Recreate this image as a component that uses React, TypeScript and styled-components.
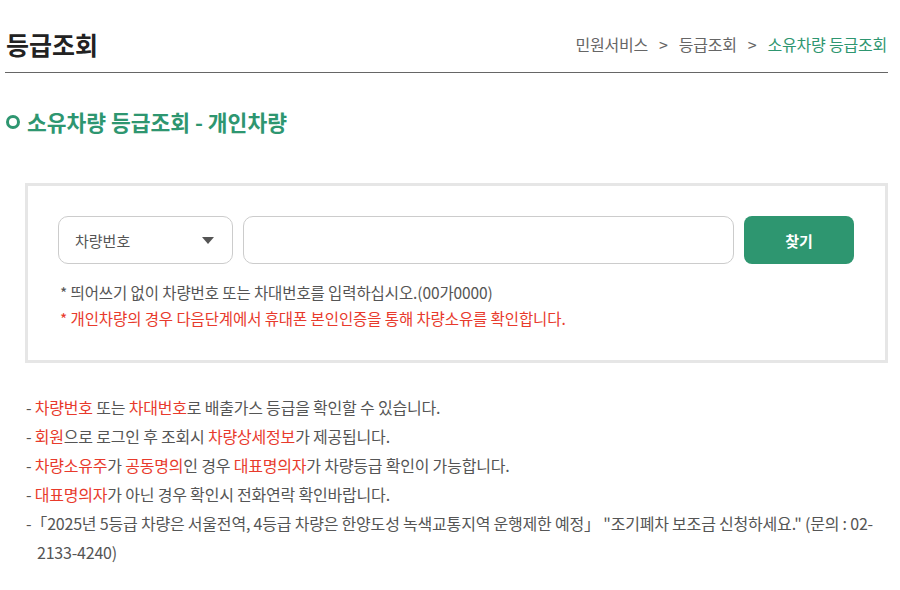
import React from "react";
import styled, { createGlobalStyle } from "styled-components";

const Global = createGlobalStyle`
  html, body { margin: 0; padding: 0; background: #fff; }
  body { font-family: "Noto Sans CJK KR", "Noto Sans", sans-serif; color: #555; }
  * { box-sizing: border-box; }
`;

const GREEN = "#2e9670";
const RED = "#e83a2c";

const Page = styled.div`
  width: 883px;
  margin-left: 5px;
`;

const Header = styled.header`
  display: flex;
  align-items: center;
  justify-content: space-between;
  height: 73px;
  padding-top: 24px;
  padding-bottom: 8px;
  border-bottom: 1px solid #666;
`;

const Title = styled.h1`
  margin: 0;
  font-size: 25px;
  line-height: 40px;
  font-weight: 700;
  color: #222;
  padding-left: 1px;
`;

const Crumbs = styled.nav`
  display: flex;
  align-items: center;
  gap: 11px;
  font-size: 16px;
  letter-spacing: -0.2px;
  color: #666;
  padding-right: 1px;
`;

const Crumb = styled.span<{ $active?: boolean }>`
  color: ${(p) => (p.$active ? GREEN : "#666")};
`;

const Heading = styled.h2`
  display: flex;
  align-items: center;
  gap: 7px;
  margin: 34px 0 0;
  font-size: 21.5px;
  line-height: 30px;
  font-weight: 700;
  color: ${GREEN};
`;

const Ring = styled.span`
  width: 14px;
  height: 14px;
  border-radius: 50%;
  border: 3.5px solid ${GREEN};
  margin-left: 1px;
`;

const SearchBox = styled.section`
  margin: 46px 0 0 20px;
  border: 3px solid #e6e6e6;
  padding: 30px 31px 29px 30px;
`;

const SearchRow = styled.div`
  display: flex;
  gap: 10px;
  height: 48px;
`;

const SelectBox = styled.div`
  width: 175px;
  flex: none;
  display: flex;
  align-items: center;
  justify-content: space-between;
  padding: 0 18px 0 16px;
  border: 1px solid #ccc;
  border-radius: 10px;
  font-size: 15px;
  color: #555;
`;

const Caret = styled.span`
  width: 0;
  height: 0;
  border-left: 6px solid transparent;
  border-right: 6px solid transparent;
  border-top: 7px solid #555;
`;

const TextInput = styled.input`
  flex: 1;
  min-width: 0;
  border: 1px solid #ccc;
  border-radius: 10px;
  font: inherit;
  padding: 0 14px;
  outline: none;
`;

const FindButton = styled.button`
  width: 110px;
  flex: none;
  border: none;
  border-radius: 8px;
  background: ${GREEN};
  color: #fff;
  font-family: inherit;
  font-size: 15px;
  font-weight: 700;
`;

const Notes = styled.div`
  margin-top: 15px;
  padding-left: 2px;
  font-size: 15.5px;
  line-height: 26px;
`;

const Note = styled.p<{ $red?: boolean }>`
  margin: 0;
  color: ${(p) => (p.$red ? RED : "#555")};
  letter-spacing: -0.1px;
`;

const List = styled.ul`
  list-style: none;
  margin: 30px 0 0;
  padding: 0 0 0 21px;
  font-size: 16px;
  line-height: 29px;
  letter-spacing: -0.2px;
`;

const Item = styled.li`
  padding-left: 11px;
  text-indent: -11px;
`;

const Em = styled.span`
  color: ${RED};
`;

export default function App() {
  return (
    <Page>
      <Global />
      <Header>
        <Title>등급조회</Title>
        <Crumbs>
          <Crumb>민원서비스</Crumb>
          <Crumb>&gt;</Crumb>
          <Crumb>등급조회</Crumb>
          <Crumb>&gt;</Crumb>
          <Crumb $active>소유차량 등급조회</Crumb>
        </Crumbs>
      </Header>
      <Heading>
        <Ring />
        소유차량 등급조회 - 개인차량
      </Heading>
      <SearchBox>
        <SearchRow>
          <SelectBox>
            차량번호
            <Caret />
          </SelectBox>
          <TextInput type="text" />
          <FindButton>찾기</FindButton>
        </SearchRow>
        <Notes>
          <Note>* 띄어쓰기 없이 차량번호 또는 차대번호를 입력하십시오.(00가0000)</Note>
          <Note $red>* 개인차량의 경우 다음단계에서 휴대폰 본인인증을 통해 차량소유를 확인합니다.</Note>
        </Notes>
      </SearchBox>
      <List>
        <Item>
          - <Em>차량번호</Em> 또는 <Em>차대번호</Em>로 배출가스 등급을 확인할 수 있습니다.
        </Item>
        <Item>
          - <Em>회원</Em>으로 로그인 후 조회시 <Em>차량상세정보</Em>가 제공됩니다.
        </Item>
        <Item>
          - <Em>차량소유주</Em>가 <Em>공동명의</Em>인 경우 <Em>대표명의자</Em>가 차량등급 확인이 가능합니다.
        </Item>
        <Item>
          - <Em>대표명의자</Em>가 아닌 경우 확인시 전화연락 확인바랍니다.
        </Item>
        <Item>
          -「2025년 5등급 차량은 서울전역, 4등급 차량은 한양도성 녹색교통지역 운행제한 예정」 "조기폐차 보조금 신청하세요." (문의 : 02-2133-4240)
        </Item>
      </List>
    </Page>
  );
}
